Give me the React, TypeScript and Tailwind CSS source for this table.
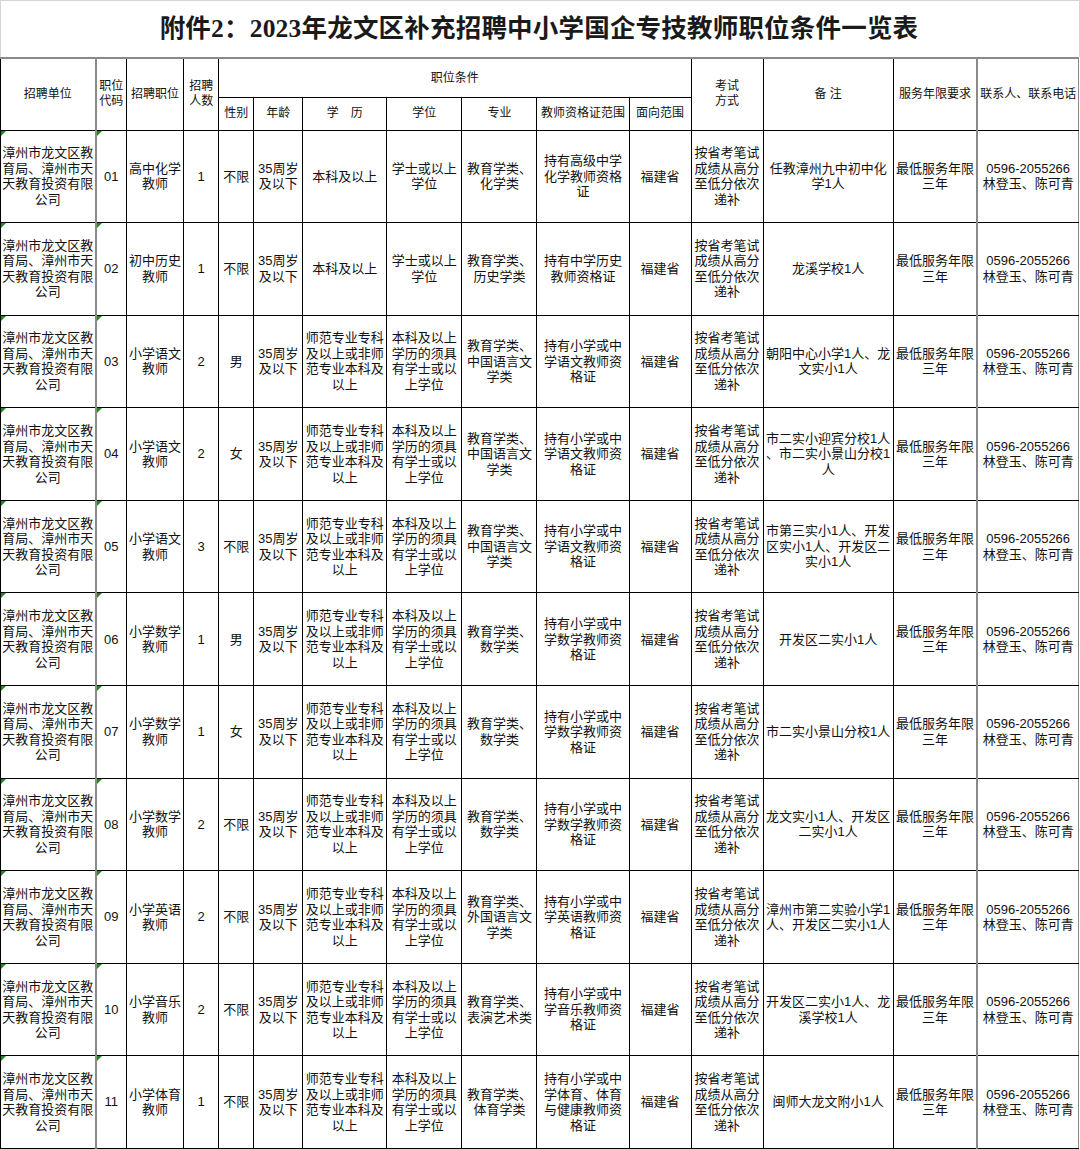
import React from 'react';

type Row = {
  code: string;
  job: string[];
  count: string;
  sex: string;
  edu: string[];
  degree: string[];
  major: string[];
  cert: string[];
  note: string[];
};

const UNIT = ['漳州市龙文区教', '育局、漳州市天', '天教育投资有限', '公司'];
const AGE = ['35周岁', '及以下'];
const EDU_A = ['师范专业专科', '及以上或非师', '范专业本科及', '以上'];
const DEG_A = ['本科及以上', '学历的须具', '有学士或以', '上学位'];
const EXAM = ['按省考笔试', '成绩从高分', '至低分依次', '递补'];
const SERVICE = ['最低服务年限', '三年'];
const CONTACT = ['0596-2055266', '林登玉、陈可青'];

const ROWS: Row[] = [
  { code: '01', job: ['高中化学', '教师'], count: '1', sex: '不限', edu: ['本科及以上'], degree: ['学士或以上', '学位'], major: ['教育学类、', '化学类'], cert: ['持有高级中学', '化学教师资格', '证'], note: ['任教漳州九中初中化', '学1人'] },
  { code: '02', job: ['初中历史', '教师'], count: '1', sex: '不限', edu: ['本科及以上'], degree: ['学士或以上', '学位'], major: ['教育学类、', '历史学类'], cert: ['持有中学历史', '教师资格证'], note: ['龙溪学校1人'] },
  { code: '03', job: ['小学语文', '教师'], count: '2', sex: '男', edu: EDU_A, degree: DEG_A, major: ['教育学类、', '中国语言文', '学类'], cert: ['持有小学或中', '学语文教师资', '格证'], note: ['朝阳中心小学1人、龙', '文实小1人'] },
  { code: '04', job: ['小学语文', '教师'], count: '2', sex: '女', edu: EDU_A, degree: DEG_A, major: ['教育学类、', '中国语言文', '学类'], cert: ['持有小学或中', '学语文教师资', '格证'], note: ['市二实小迎宾分校1人', '、市二实小景山分校1', '人'] },
  { code: '05', job: ['小学语文', '教师'], count: '3', sex: '不限', edu: EDU_A, degree: DEG_A, major: ['教育学类、', '中国语言文', '学类'], cert: ['持有小学或中', '学语文教师资', '格证'], note: ['市第三实小1人、开发', '区实小1人、开发区二', '实小1人'] },
  { code: '06', job: ['小学数学', '教师'], count: '1', sex: '男', edu: EDU_A, degree: DEG_A, major: ['教育学类、', '数学类'], cert: ['持有小学或中', '学数学教师资', '格证'], note: ['开发区二实小1人'] },
  { code: '07', job: ['小学数学', '教师'], count: '1', sex: '女', edu: EDU_A, degree: DEG_A, major: ['教育学类、', '数学类'], cert: ['持有小学或中', '学数学教师资', '格证'], note: ['市二实小景山分校1人'] },
  { code: '08', job: ['小学数学', '教师'], count: '2', sex: '不限', edu: EDU_A, degree: DEG_A, major: ['教育学类、', '数学类'], cert: ['持有小学或中', '学数学教师资', '格证'], note: ['龙文实小1人、开发区', '二实小1人'] },
  { code: '09', job: ['小学英语', '教师'], count: '2', sex: '不限', edu: EDU_A, degree: DEG_A, major: ['教育学类、', '外国语言文', '学类'], cert: ['持有小学或中', '学英语教师资', '格证'], note: ['漳州市第二实验小学1', '人、开发区二实小1人'] },
  { code: '10', job: ['小学音乐', '教师'], count: '2', sex: '不限', edu: EDU_A, degree: DEG_A, major: ['教育学类、', '表演艺术类'], cert: ['持有小学或中', '学音乐教师资', '格证'], note: ['开发区二实小1人、龙', '溪学校1人'] },
  { code: '11', job: ['小学体育', '教师'], count: '1', sex: '不限', edu: EDU_A, degree: DEG_A, major: ['教育学类、', '体育学类'], cert: ['持有小学或中', '学体育、体育', '与健康教师资', '格证'], note: ['闽师大龙文附小1人'] },
];

const WIDTHS = [95, 31, 57, 35, 35, 49, 84, 75, 75, 92, 62, 72, 130, 84, 101];

function Lines({ lines }: { lines: string[] }) {
  return <>{lines.join('\n')}</>;
}

function Marker() {
  return (
    <span className="absolute left-0 top-0 h-0 w-0 border-l-[5px] border-b-[5px] border-l-[#1e8a1e] border-b-transparent" />
  );
}

const td = 'border border-black px-0 text-center align-middle whitespace-pre';
const th = 'border border-black px-0 text-center align-middle whitespace-pre font-normal text-[12px] leading-[15px]';

export default function App() {
  return (
    <div className="w-[1080px] h-[1149px] bg-white text-[#111] font-['Liberation_Sans','Noto_Sans_CJK_SC',sans-serif] overflow-hidden">
      <div className="h-[57px] border-t border-x border-[#d4d4d4] flex items-center justify-center pr-[2px]">
        <h1 className="text-[25.5px] font-bold tracking-[0.2px] font-['Liberation_Serif','Noto_Sans_CJK_SC',serif] text-[#1a1a1a]">
          附件2：2023年龙文区补充招聘中小学国企专技教师职位条件一览表
        </h1>
      </div>
      <table className="w-[1079px] table-fixed border-collapse text-[13px] leading-[15.5px]">
        <colgroup>
          {WIDTHS.map((w, i) => (
            <col key={i} style={{ width: w }} />
          ))}
        </colgroup>
        <thead>
          <tr className="h-[39.5px] border-t-2 border-t-[#8a8a8a]">
            <th rowSpan={2} className={`${th} border-r-2 border-r-[#8a8a8a]`}>招聘单位</th>
            <th rowSpan={2} className={th}>{'职位\n代码'}</th>
            <th rowSpan={2} className={th}>招聘职位</th>
            <th rowSpan={2} className={th}>{'招聘\n人数'}</th>
            <th colSpan={7} className={th}>职位条件</th>
            <th rowSpan={2} className={th}>{'考试\n方式'}</th>
            <th rowSpan={2} className={th}>备 注</th>
            <th rowSpan={2} className={`${th} border-r-2 border-r-[#8a8a8a]`}>服务年限要求</th>
            <th rowSpan={2} className={`${th} border-r-[#8a8a8a]`}>联系人、联系电话</th>
          </tr>
          <tr className="h-[32.5px]">
            <th className={th}>性别</th>
            <th className={th}>年龄</th>
            <th className={th}>学　历</th>
            <th className={th}>学位</th>
            <th className={th}>专业</th>
            <th className={th}>教师资格证范围</th>
            <th className={th}>面向范围</th>
          </tr>
        </thead>
        <tbody>
          {ROWS.map((r) => (
            <tr key={r.code} className="h-[92.6px]">
              <td className={`${td} relative border-r-2 border-r-[#8a8a8a]`}>
                <Marker />
                <Lines lines={UNIT} />
              </td>
              <td className={`${td} relative`}>
                <Marker />
                {r.code}
              </td>
              <td className={td}><Lines lines={r.job} /></td>
              <td className={td}>{r.count}</td>
              <td className={td}>{r.sex}</td>
              <td className={td}><Lines lines={AGE} /></td>
              <td className={td}><Lines lines={r.edu} /></td>
              <td className={td}><Lines lines={r.degree} /></td>
              <td className={td}><Lines lines={r.major} /></td>
              <td className={td}><Lines lines={r.cert} /></td>
              <td className={td}>福建省</td>
              <td className={td}><Lines lines={EXAM} /></td>
              <td className={td}><Lines lines={r.note} /></td>
              <td className={`${td} border-r-2 border-r-[#8a8a8a]`}><Lines lines={SERVICE} /></td>
              <td className={`${td} border-r-[#8a8a8a]`}><Lines lines={CONTACT} /></td>
            </tr>
          ))}
        </tbody>
      </table>
    </div>
  );
}
